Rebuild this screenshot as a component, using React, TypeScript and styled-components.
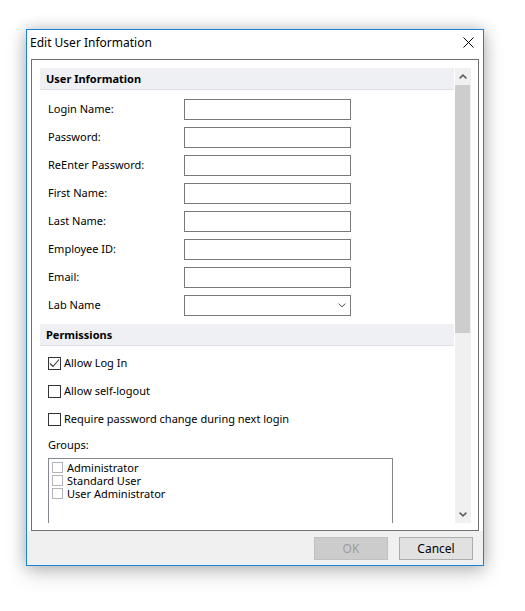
import * as React from "react";
import styled, { createGlobalStyle } from "styled-components";

const GlobalStyle = createGlobalStyle`
  * { box-sizing: border-box; }
  body {
    margin: 0;
    background: #ffffff;
    font-family: "Noto Sans", "Open Sans", sans-serif;
    font-size: 11px;
    color: #000;
  }
`;

const Page = styled.div`
  padding: 29px 0 40px 26px;
`;

const Window = styled.div`
  width: 458px;
  height: 537px;
  border: 1px solid #1883d7;
  background: #ffffff;
  box-shadow: 0 0 14px rgba(0, 0, 0, 0.22), 0 7px 20px rgba(0, 0, 0, 0.18);
  display: flex;
  flex-direction: column;
`;

const TitleBar = styled.div`
  height: 29px;
  padding: 0 9px 4px 3px;
  display: flex;
  align-items: center;
  justify-content: space-between;
  font-size: 12px;
`;

const Panel = styled.div`
  height: 472px;
  margin: 0 4px;
  border: 1px solid #707070;
  padding: 8px 7px 7px 8px;
  display: flex;
`;

const ScrollArea = styled.div`
  flex: 1;
  overflow: hidden;
`;

const SectionHeader = styled.div`
  height: 22px;
  margin-right: 1px;
  padding: 0 0 1px 6px;
  background: #eef0f4;
  border-bottom: 1px solid #dde0e6;
  display: flex;
  align-items: center;
  font-weight: 700;
`;

const FieldGrid = styled.div`
  display: grid;
  grid-template-columns: 136px 167px;
  row-gap: 7px;
  align-items: center;
  padding: 9px 0 8px 8px;
`;

const Label = styled.div`
  line-height: 19px;
  padding-bottom: 2px;
`;

const TextBox = styled.div`
  height: 21px;
  border: 1px solid #7a7a7a;
  background: #fff;
  display: flex;
  align-items: center;
  justify-content: flex-end;
  padding-right: 4px;
`;

const CheckList = styled.div`
  display: flex;
  flex-direction: column;
  gap: 15px;
  padding: 11px 0 0 8px;
`;

const CheckRow = styled.div`
  display: flex;
  align-items: center;
  gap: 3px;
  height: 13px;
  line-height: 12px;
`;

const CheckText = styled.span`
  padding-bottom: 1px;
`;

const Box = styled.div<{ $small?: boolean }>`
  width: ${(p) => (p.$small ? 11 : 13)}px;
  height: ${(p) => (p.$small ? 11 : 13)}px;
  border: 1px solid ${(p) => (p.$small ? "#b4b4b4" : "#333333")};
  background: #fff;
  display: flex;
  align-items: center;
  justify-content: center;
  flex-shrink: 0;
`;

const GroupsLabel = styled.div`
  padding: 12px 0 7px 8px;
  line-height: 13px;
`;

const GroupList = styled.div`
  margin-left: 8px;
  width: 345px;
  height: 90px;
  border: 1px solid #828790;
  padding: 2px 0 0 3px;
  display: flex;
  flex-direction: column;
`;

const GroupItem = styled.div`
  display: flex;
  align-items: center;
  gap: 4px;
  height: 13px;
  line-height: 12px;
`;

const ScrollBar = styled.div`
  width: 16px;
  background: #f0f0f0;
  display: flex;
  flex-direction: column;
`;

const ScrollArrow = styled.div`
  height: 17px;
  display: flex;
  align-items: center;
  justify-content: center;
`;

const Thumb = styled.div`
  height: 248px;
  margin-right: 1px;
  background: #cdcdcd;
`;

const Spacer = styled.div`
  flex: 1;
`;

const Footer = styled.div`
  flex: 1;
  background: #f0f0f0;
  display: flex;
  justify-content: flex-end;
  align-items: flex-start;
  gap: 11px;
  padding: 6px 10px 0 0;
`;

const Button = styled.button<{ $disabled?: boolean }>`
  width: 74px;
  height: 23px;
  font-family: inherit;
  font-size: 12px;
  padding: 0;
  border: 1px solid ${(p) => (p.$disabled ? "#bfbfbf" : "#adadad")};
  background: ${(p) => (p.$disabled ? "#cccccc" : "#e1e1e1")};
  color: ${(p) => (p.$disabled ? "#9d9d9d" : "#000")};
`;

const fields = [
  "Login Name:",
  "Password:",
  "ReEnter Password:",
  "First Name:",
  "Last Name:",
  "Employee ID:",
  "Email:",
];

const permissions = [
  { label: "Allow Log In", checked: true },
  { label: "Allow self-logout", checked: false },
  { label: "Require password change during next login", checked: false },
];

const groups = ["Administrator", "Standard User", "User Administrator"];

const Chevron = ({ up, bold, color }: { up?: boolean; bold?: boolean; color: string }) => (
  <svg width="8" height="5" viewBox="0 0 8 5">
    <polyline
      points={up ? "0.6,4.4 4,1.2 7.4,4.4" : "0.6,0.6 4,3.8 7.4,0.6"}
      fill="none"
      stroke={color}
      strokeWidth={bold ? 1.6 : 1}
    />
  </svg>
);

export default function App() {
  return (
    <Page>
      <GlobalStyle />
      <Window>
        <TitleBar>
          <span>Edit User Information</span>
          <svg width="11" height="11" viewBox="0 0 11 11">
            <path d="M0.5 0.5 L10.5 10.5 M10.5 0.5 L0.5 10.5" stroke="#000" strokeWidth="1" />
          </svg>
        </TitleBar>
        <Panel>
          <ScrollArea>
            <SectionHeader>User Information</SectionHeader>
            <FieldGrid>
              {fields.map((f) => (
                <React.Fragment key={f}>
                  <Label>{f}</Label>
                  <TextBox />
                </React.Fragment>
              ))}
              <Label>Lab Name</Label>
              <TextBox>
                <Chevron color="#505050" />
              </TextBox>
            </FieldGrid>
            <SectionHeader>Permissions</SectionHeader>
            <CheckList>
              {permissions.map((p) => (
                <CheckRow key={p.label}>
                  <Box>
                    {p.checked && (
                      <svg width="11" height="11" viewBox="0 0 11 11">
                        <polyline points="1,5.5 4,8.5 10,1.5" fill="none" stroke="#333" strokeWidth="1.1" />
                      </svg>
                    )}
                  </Box>
                  <CheckText>{p.label}</CheckText>
                </CheckRow>
              ))}
            </CheckList>
            <GroupsLabel>Groups:</GroupsLabel>
            <GroupList>
              {groups.map((g) => (
                <GroupItem key={g}>
                  <Box $small />
                  <span>{g}</span>
                </GroupItem>
              ))}
            </GroupList>
          </ScrollArea>
          <ScrollBar>
            <ScrollArrow>
              <Chevron up bold color="#606060" />
            </ScrollArrow>
            <Thumb />
            <Spacer />
            <ScrollArrow>
              <Chevron bold color="#606060" />
            </ScrollArrow>
          </ScrollBar>
        </Panel>
        <Footer>
          <Button $disabled disabled>
            OK
          </Button>
          <Button>Cancel</Button>
        </Footer>
      </Window>
    </Page>
  );
}
